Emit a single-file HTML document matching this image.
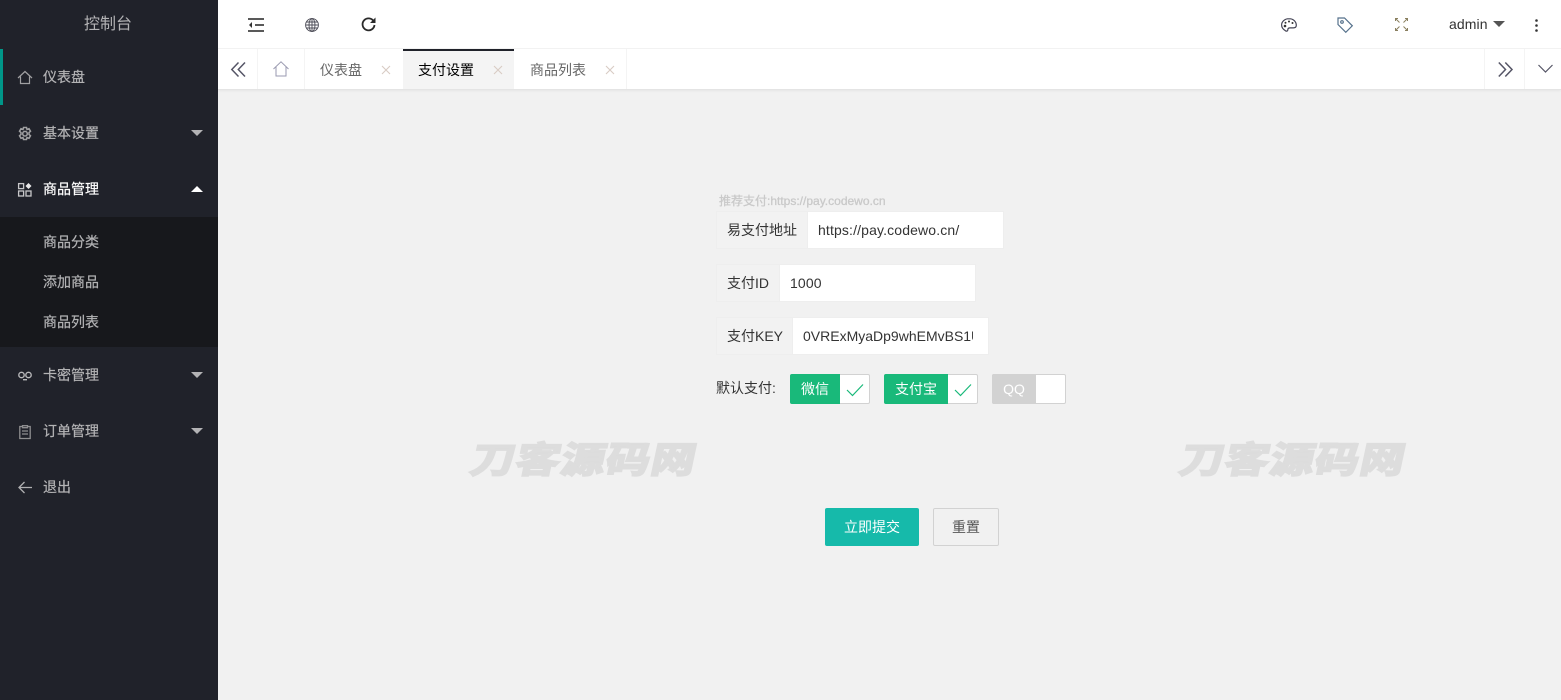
<!DOCTYPE html>
<html lang="zh-CN">
<head>
<meta charset="utf-8">
<title>控制台</title>
<style>
*{box-sizing:border-box;margin:0;padding:0}
html,body{width:1561px;height:700px;overflow:hidden;background:#f1f1f1;font-family:"Liberation Sans","Noto Sans CJK SC",sans-serif;font-size:14px;color:#333}
.a{position:absolute;white-space:nowrap}
svg{position:absolute;fill:none;overflow:visible}
#side{position:absolute;left:0;top:0;width:218px;height:700px;background:#20222a}
#sub{position:absolute;left:0;top:217px;width:218px;height:130px;background:#17181c}
#bar{position:absolute;left:0;top:49px;width:3px;height:56px;background:#009688}
.m{position:absolute;left:43px;line-height:20px;height:20px;color:#b3b3b5;font-size:14px;white-space:nowrap;-webkit-text-stroke:.2px currentColor}
.tri{position:absolute;left:191px;width:0;height:0;border-left:6px solid transparent;border-right:6px solid transparent}
.dn{border-top:6px solid #b3b3b5}
.up{border-bottom:6px solid #fff}
#top{position:absolute;left:218px;top:0;width:1343px;height:49px;background:#fff;border-bottom:1px solid #f2f2f2}
#tabs{position:absolute;left:218px;top:49px;width:1343px;height:41px;background:#fff;border-bottom:1px solid #e4e4e4;box-shadow:0 1px 2px rgba(0,0,0,.05)}
.v{position:absolute;top:49px;width:1px;height:40px;background:#f4f4f4}
.tab{position:absolute;top:62px;line-height:16px;font-size:14px;color:#666;white-space:nowrap}
.lab{position:absolute;height:38px;line-height:37px;background:#f2f2f2;border:1px solid #eee;padding-left:10px;color:#333;font-size:14px;white-space:nowrap}
.inp{position:absolute;height:38px;line-height:37px;background:#fff;border:1px solid #eee;padding-left:10px;color:#333;font-size:14px;white-space:nowrap;overflow:hidden;letter-spacing:.14px}
.sw{position:absolute;top:374px;height:30px;background:#fff;border:1px solid #d2d2d2;border-radius:2px}
.swl{position:absolute;top:374px;height:30px;line-height:30px;text-align:center;color:#fff;font-size:14px;border-radius:2px 0 0 2px;background:#19b97a}
.wm{position:absolute;top:433px;font-size:40px;line-height:48px;font-weight:700;color:#dddddd;transform-origin:left center;transform:skewX(-12deg) scale(1.1,.9);letter-spacing:1px;white-space:nowrap;-webkit-text-stroke:2.2px #dddddd;font-family:"Noto Sans CJK SC",sans-serif}
</style>
</head>
<body>
<div id="side"></div>
<div id="sub"></div>
<div id="bar"></div>
<div class="a" style="left:0;top:14px;width:216px;text-align:center;line-height:22px;font-size:16px;color:#b3b3b5">控制台</div>

<svg style="left:17px;top:70px" width="16" height="15" viewBox="0 0 16 15" stroke="#a0a0a2" stroke-width="1.200"><path d="M1 8 8 1.500 15 8M3.500 6.500V13.500H12.500V6.500"/></svg>
<div class="m" style="top:67px">仪表盘</div>

<svg style="left:17px;top:126px" width="16" height="16" viewBox="0 0 16 16" stroke="#a0a0a2" stroke-width="1.500"><path d="M6.500 1.500h3l.5 2 2-.8 1.500 2.500-1.500 1.400.0 1.800 1.500 1.400-1.500 2.500-2-.8-.5 2h-3l-.5-2-2 .8L2.500 9.800 4 8.400V6.600L2.500 5.200 4 2.700l2 .8z"/><circle cx="8" cy="7.700" r="2.300"/></svg>
<div class="m" style="top:123px">基本设置</div>
<div class="tri dn" style="top:130px"></div>

<svg style="left:18px;top:183px" width="14" height="14" viewBox="0 0 14 14" stroke="#c8c8ca" stroke-width="1.300"><rect x=".6" y=".6" width="5" height="5"/><rect x=".6" y="8" width="5" height="5"/><rect x="8" y="8" width="5" height="5"/><path d="M10.500 0 13.500 3 10.500 6 7.500 3z" fill="#e8e8e8" stroke="none"/></svg>
<div class="m" style="top:179px;color:#fff">商品管理</div>
<div class="tri up" style="top:186px"></div>

<div class="m" style="top:232px">商品分类</div>
<div class="m" style="top:272px">添加商品</div>
<div class="m" style="top:312px">商品列表</div>

<svg style="left:18px;top:369px" width="14" height="12" viewBox="0 0 14 12" stroke="#b8b8ba" stroke-width="1.400"><circle cx="3.500" cy="6" r="2.700"/><circle cx="10.500" cy="6" r="2.700"/><path d="M5 10.700h4"/></svg>
<div class="m" style="top:365px">卡密管理</div>
<div class="tri dn" style="top:372px"></div>

<svg style="left:19px;top:425px" width="12" height="14" viewBox="0 0 12 14" stroke="#8e8e90" stroke-width="1.300"><path d="M3.500 1.500H.8v12h10.400v-12H8.500M3.500.7h5v2h-5zM3 6h6M3 9h6"/></svg>
<div class="m" style="top:421px">订单管理</div>
<div class="tri dn" style="top:428px"></div>

<svg style="left:18px;top:481px" width="14" height="13" viewBox="0 0 14 13" stroke="#b0b0b2" stroke-width="1.300"><path d="M6.500 1 1 6.500 6.500 12M1 6.500H14"/></svg>
<div class="m" style="top:477px">退出</div>

<div id="top"></div>
<svg style="left:248px;top:18px" width="16" height="14" viewBox="0 0 16 14" stroke="#222" stroke-width="1.500"><path d="M0 1h16M7 7h9M0 13h16"/><path d="M4 4 1 7l3 3z" fill="#333" stroke="none"/></svg>
<svg style="left:305px;top:18px" width="14" height="14" viewBox="0 0 14 14" stroke="#4a4a55" stroke-width=".9"><circle cx="7" cy="7" r="6.400"/><ellipse cx="7" cy="7" rx="3" ry="6.400"/><path d="M7 .6v12.800M.6 7h12.800M1.500 4h11M1.500 10h11"/></svg>
<svg style="left:361px;top:17px" width="15" height="15" viewBox="0 0 15 15" stroke="#2a2a2a" stroke-width="1.800"><path d="M12.700 4.300A6 6 0 1 0 13.500 8"/><path d="M14.500 .5v5.500H9z" fill="#2a2a2a" stroke="none"/></svg>

<svg style="left:1281px;top:18px" width="16" height="14" viewBox="0 0 16 14" stroke="#445" stroke-width="1.200"><path d="M8 .7C3.800.7.600 3.500.6 7c0 3 2.600 5 3.900 5.800 1.200.7 2.300.3 2.300-.9 0-1.200.9-2 2.200-2h3.300c2 0 3-1 3-2.500C15.300 3.500 12.200.7 8 .7z"/><circle cx="4" cy="8" r="1.300" fill="#333" stroke="none"/><circle cx="4.500" cy="4.800" r="1" fill="#333" stroke="none"/><circle cx="8" cy="3.500" r="1" fill="#333" stroke="none"/><circle cx="11.500" cy="5" r="1" fill="#333" stroke="none"/></svg>
<svg style="left:1337px;top:17px" width="16" height="16" viewBox="0 0 16 16" stroke="#56728c" stroke-width="1.200"><path d="M1 1h6.500l7.800 7.800-6.500 6.500L1 7.500z"/><circle cx="5" cy="5" r="1.300"/></svg>
<svg style="left:1395px;top:18px" width="13" height="13" viewBox="0 0 13 13" stroke="#8a8060" stroke-width="1"><path d="M.5 3v-2.500H3M.5.500l4 4M10 .5h2.500V3M12.500.5l-4 4M.5 10v2.500H3M.5 12.500l4-4M12.500 10v2.500H10M12.500 12.500l-4-4"/></svg>
<div class="a" style="left:1449px;top:15px;line-height:18px;font-size:14px;color:#333;letter-spacing:.1px">admin</div>
<div class="a" style="left:1493px;top:21px;width:0;height:0;border-left:6px solid transparent;border-right:6px solid transparent;border-top:6px solid #555"></div>
<svg style="left:1535px;top:19px" width="3" height="13" viewBox="0 0 3 13"><circle cx="1.500" cy="1.500" r="1.300" fill="#333"/><circle cx="1.500" cy="6.500" r="1.300" fill="#333"/><circle cx="1.500" cy="11.500" r="1.300" fill="#333"/></svg>

<div id="tabs"></div>
<div class="a" style="left:403px;top:49px;width:111px;height:40px;background:#f4f4f4"></div>
<div class="a" style="left:403px;top:49px;width:111px;height:2px;background:#20222a"></div>
<div class="v" style="left:257px"></div>
<div class="v" style="left:304px"></div>
<div class="v" style="left:626px"></div>
<div class="v" style="left:1484px"></div>
<div class="v" style="left:1524px"></div>

<svg style="left:231px;top:62px" width="15" height="15" viewBox="0 0 15 15" stroke="#556" stroke-width="1.500"><path d="M7.500 .5 .8 7.500l6.700 7M14 .5 7.300 7.500l6.700 7"/></svg>
<svg style="left:273px;top:61px" width="16" height="16" viewBox="0 0 16 16" stroke="#9a9ab0" stroke-width="1"><path d="M.5 8 8 .8 15.500 8M3 6v9h10V6"/></svg>
<div class="tab" style="left:320px">仪表盘</div>
<svg style="left:382px;top:66px" width="8" height="8" viewBox="0 0 8 8" stroke="#d8ccc4" stroke-width="1.100"><path d="M0 0l8 8M8 0 0 8"/></svg>
<div class="tab" style="left:418px;color:#000">支付设置</div>
<svg style="left:494px;top:66px" width="8" height="8" viewBox="0 0 8 8" stroke="#d8ccc4" stroke-width="1.100"><path d="M0 0l8 8M8 0 0 8"/></svg>
<div class="tab" style="left:530px">商品列表</div>
<svg style="left:606px;top:66px" width="8" height="8" viewBox="0 0 8 8" stroke="#d8ccc4" stroke-width="1.100"><path d="M0 0l8 8M8 0 0 8"/></svg>
<svg style="left:1498px;top:62px" width="15" height="15" viewBox="0 0 15 15" stroke="#556" stroke-width="1.500"><path d="M.8 .5 7.500 7.500.8 14.500M7.300 .5 14 7.500l-6.700 7"/></svg>
<svg style="left:1538px;top:64px" width="15" height="9" viewBox="0 0 15 9" stroke="#556" stroke-width="1.200"><path d="M.5 1 7.500 8 14.500 1"/></svg>

<div class="a" style="left:719px;top:193px;line-height:16px;font-size:12px;font-weight:400;color:#c9c9c9;-webkit-text-stroke:.3px #c9c9c9">推荐支付:https://pay.codewo.cn</div>

<div class="lab" style="left:716px;top:211px;width:92px">易支付地址</div>
<div class="inp" style="left:807px;top:211px;width:197px">https://pay.codewo.cn/</div>
<div class="lab" style="left:716px;top:264px;width:64px">支付ID</div>
<div class="inp" style="left:779px;top:264px;width:197px">1000</div>
<div class="lab" style="left:716px;top:317px;width:77px">支付KEY</div>
<div class="inp" style="left:792px;top:317px;width:197px;letter-spacing:0"><span style="display:block;width:170px;overflow:hidden">0VRExMyaDp9whEMvBS1U8s</span></div>

<div class="a" style="left:716px;top:379px;line-height:18px;font-size:14px;color:#333">默认支付:</div>

<div class="sw" style="left:790px;width:80px"></div>
<div class="swl" style="left:790px;width:50px">微信</div>
<svg style="left:846px;top:383px" width="18" height="14" viewBox="0 0 18 14" stroke="#19b97a" stroke-width="1.200"><path d="M1 7l5.500 5.500L17 1.500"/></svg>

<div class="sw" style="left:884px;width:94px"></div>
<div class="swl" style="left:884px;width:64px">支付宝</div>
<svg style="left:954px;top:383px" width="18" height="14" viewBox="0 0 18 14" stroke="#19b97a" stroke-width="1.200"><path d="M1 7l5.500 5.500L17 1.500"/></svg>

<div class="sw" style="left:992px;width:74px"></div>
<div class="swl" style="left:992px;width:44px;background:#d2d2d2">QQ</div>

<div class="wm" style="left:472px">刀客源码网</div>
<div class="wm" style="left:1181px">刀客源码网</div>

<div class="a" style="left:825px;top:508px;width:94px;height:38px;line-height:38px;text-align:center;background:#16baaa;color:#fff;border-radius:2px;font-size:14px">立即提交</div>
<div class="a" style="left:933px;top:508px;width:66px;height:38px;line-height:36px;text-align:center;background:#f1f1f1;color:#555;border:1px solid #d2d2d2;border-radius:2px;font-size:14px">重置</div>
</body>
</html>
